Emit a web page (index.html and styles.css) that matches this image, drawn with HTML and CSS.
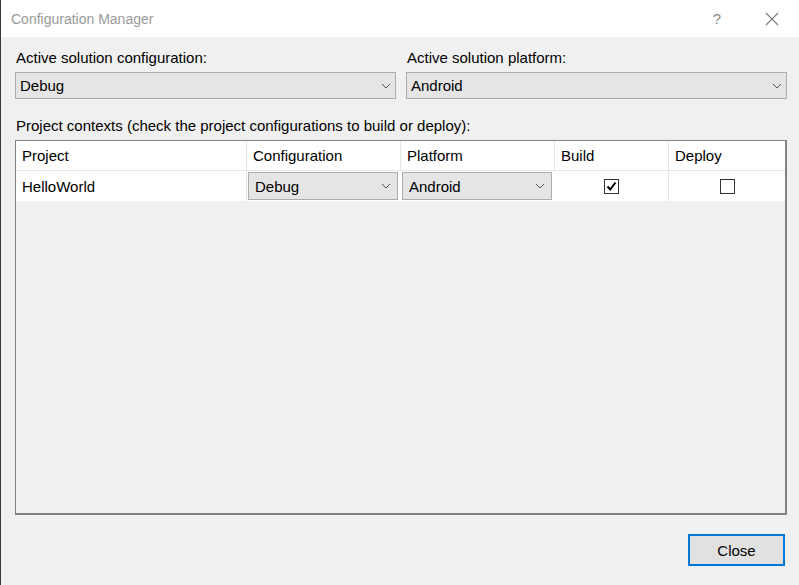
FILE: index.html
```html
<!DOCTYPE html>
<html>
<head>
<meta charset="utf-8">
<link rel="stylesheet" href="styles.css">
</head>
<body>
<div class="window">
  <div class="titlebar">
    <span class="title">Configuration Manager</span>
    <span class="tb-btns">
      <span class="help">?</span>
      <svg class="close-x" width="14" height="14" viewBox="0 0 14 14"><path d="M1 1L13 13M13 1L1 13" stroke="#7a7a7a" stroke-width="1.1" fill="none"/></svg>
    </span>
  </div>
  <div class="content">
    <div class="top-row">
      <div class="field">
        <div class="label">Active solution configuration:</div>
        <div class="combo"><span>Debug</span><svg class="arrow" width="10" height="6" viewBox="0 0 10 6"><path d="M1 1L5 5L9 1" stroke="#555" stroke-width="1" fill="none"/></svg></div>
      </div>
      <div class="field">
        <div class="label">Active solution platform:</div>
        <div class="combo"><span>Android</span><svg class="arrow" width="10" height="6" viewBox="0 0 10 6"><path d="M1 1L5 5L9 1" stroke="#555" stroke-width="1" fill="none"/></svg></div>
      </div>
    </div>
    <div class="label ctx">Project contexts (check the project configurations to build or deploy):</div>
    <div class="grid">
      <div class="row head">
        <div class="cell c1">Project</div>
        <div class="cell c2">Configuration</div>
        <div class="cell c3">Platform</div>
        <div class="cell c4">Build</div>
        <div class="cell c5">Deploy</div>
      </div>
      <div class="row data">
        <div class="cell c1">HelloWorld</div>
        <div class="cell c2 cc"><div class="mini-combo"><span>Debug</span><svg class="arrow" width="10" height="6" viewBox="0 0 10 6"><path d="M1 1L5 5L9 1" stroke="#555" stroke-width="1" fill="none"/></svg></div></div>
        <div class="cell c3 cc"><div class="mini-combo"><span>Android</span><svg class="arrow" width="10" height="6" viewBox="0 0 10 6"><path d="M1 1L5 5L9 1" stroke="#555" stroke-width="1" fill="none"/></svg></div></div>
        <div class="cell c4 center"><span class="check"><svg width="13" height="13" viewBox="0 0 13 13"><path d="M2.5 6.5L5.2 9.5L10.5 2.5" stroke="#000" stroke-width="2" fill="none"/></svg></span></div>
        <div class="cell c5 center"><span class="check"></span></div>
      </div>
    </div>
    <div class="footer">
      <button class="btn">Close</button>
    </div>
  </div>
</div>
</body>
</html>
```

FILE: styles.css
```css
html, body {
  margin: 0;
  padding: 0;
  background: #f0f0f0;
}
body {
  font-family: "Liberation Sans", Arial, sans-serif;
  font-size: 15px;
  color: #000;
}
.window {
  width: 799px;
  height: 585px;
  box-sizing: border-box;
  border-left: 1px solid #3a3a3a;
  display: flex;
  flex-direction: column;
}
.titlebar {
  height: 37px;
  background: #fff;
  display: flex;
  align-items: center;
  justify-content: space-between;
  padding-left: 10px;
  padding-right: 20px;
}
.title {
  color: #9a9a9a;
  font-size: 14px;
}
.tb-btns {
  display: flex;
  align-items: center;
  gap: 44px;
}
.help {
  color: #8a8a8a;
  font-size: 15px;
}
.content {
  flex: 1;
  padding: 10px 12px 0 14px;
  display: flex;
  flex-direction: column;
}
.top-row {
  display: flex;
  gap: 10px;
}
.field {
  flex: 1;
  display: flex;
  flex-direction: column;
}
.label {
  height: 22px;
  line-height: 22px;
  padding-left: 1px;
}
.combo {
  margin-top: 3px;
  height: 27px;
  box-sizing: border-box;
  border: 1px solid #adadad;
  background: #e5e5e5;
  display: flex;
  align-items: center;
  justify-content: space-between;
  padding: 0 4px 0 4px;
}
.ctx {
  margin-top: 16px;
}
.grid {
  margin-top: 3px;
  height: 375px;
  box-sizing: border-box;
  border: 1px solid #828282;
  border-right-width: 2px;
  border-bottom-width: 2px;
  background: #f0f0f0;
}
.row {
  display: flex;
  height: 30px;
  background: #fff;
}
.row.head {
  height: 29px;
  border-bottom: 1px solid #e5e5e5;
}
.cell {
  box-sizing: border-box;
  display: flex;
  align-items: center;
  padding-left: 6px;
  border-right: 1px solid #e5e5e5;
}
.c1 { width: 231px; }
.c2 { width: 154px; }
.c3 { width: 154px; }
.c4 { width: 114px; }
.c5 { flex: 1; border-right: none; }
.cc {
  padding: 1px 3px 1px 1px;
  border-right: none;
}
.mini-combo {
  flex: 1;
  height: 28px;
  box-sizing: border-box;
  border: 1px solid #adadad;
  background: #e5e5e5;
  display: flex;
  align-items: center;
  justify-content: space-between;
  padding: 0 6px 0 6px;
}
.center {
  justify-content: center;
  padding-left: 0;
}
.check {
  width: 15px;
  height: 15px;
  box-sizing: border-box;
  border: 1px solid #333;
  background: #fff;
  display: flex;
  align-items: center;
  justify-content: center;
}
.footer {
  display: flex;
  justify-content: flex-end;
  padding-top: 19px;
  padding-right: 2px;
}
.btn {
  width: 97px;
  height: 32px;
  box-sizing: border-box;
  border: 2px solid #0078d7;
  background: #e1e1e1;
  font-family: "Liberation Sans", Arial, sans-serif;
  font-size: 15px;
  color: #000;
  padding: 0;
}
```
